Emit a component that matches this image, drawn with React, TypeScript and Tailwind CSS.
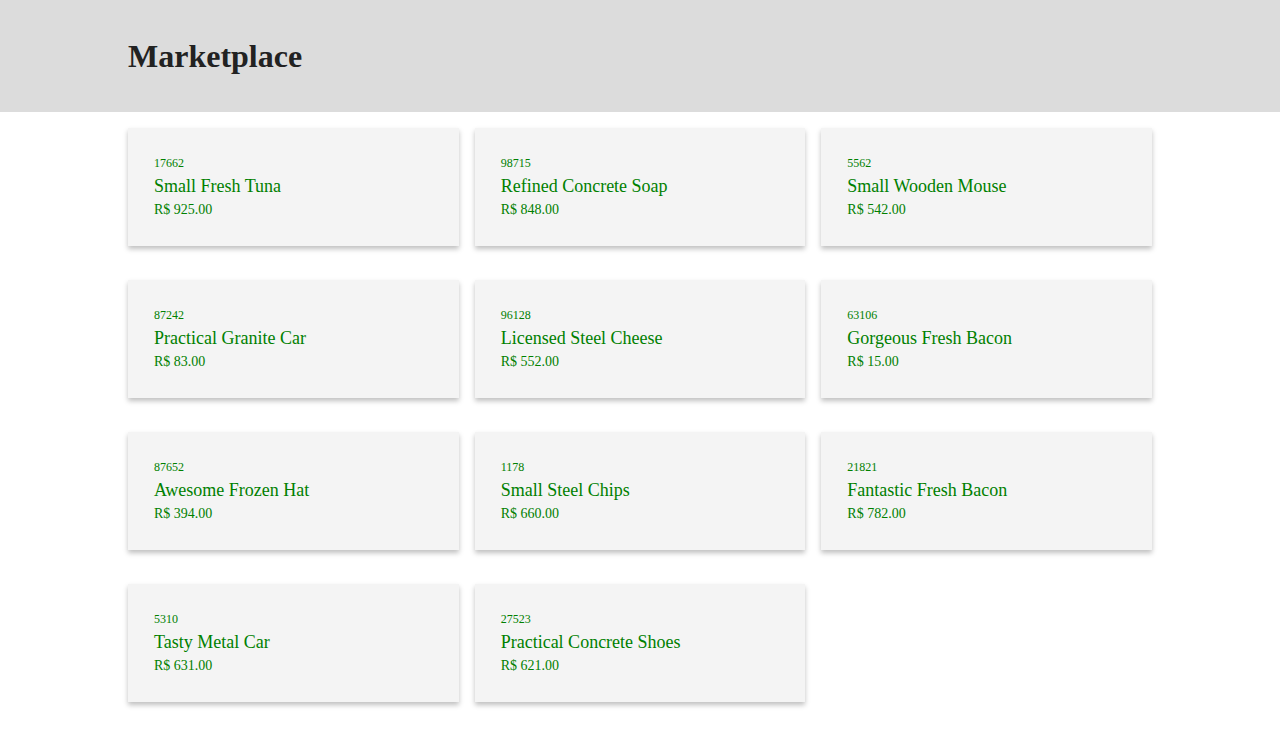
const products = [
  { id: 17662, name: "Small Fresh Tuna", price: 925 },
  { id: 98715, name: "Refined Concrete Soap", price: 848 },
  { id: 5562, name: "Small Wooden Mouse", price: 542 },
  { id: 87242, name: "Practical Granite Car", price: 83 },
  { id: 96128, name: "Licensed Steel Cheese", price: 552 },
  { id: 63106, name: "Gorgeous Fresh Bacon", price: 15 },
  { id: 87652, name: "Awesome Frozen Hat", price: 394 },
  { id: 1178, name: "Small Steel Chips", price: 660 },
  { id: 21821, name: "Fantastic Fresh Bacon", price: 782 },
  { id: 5310, name: "Tasty Metal Car", price: 631 },
  { id: 27523, name: "Practical Concrete Shoes", price: 621 },
]

function ProductCard({ id, name, price }: { id: number; name: string; price: number }) {
  return (
    <div className="h-[118px] bg-[#f4f4f4] px-[26px] pt-[27px] text-[#008000] shadow-[0_3px_5px_rgba(0,0,0,0.25)]">
      <p className="text-[12px] leading-[16px]">{id}</p>
      <p className="mt-[4px] text-[18px] leading-[22px]">{name}</p>
      <p className="mt-[4px] text-[14px] leading-[18px]">R$ {price.toFixed(2)}</p>
    </div>
  )
}

export default function App() {
  return (
    <div className="min-h-screen bg-white font-['Liberation_Serif',serif]">
      <header className="h-[112px] bg-[#dcdcdc]">
        <div className="mx-auto flex h-full w-[1024px] items-center">
          <h1 className="text-[32px] font-bold text-[#222]">Marketplace</h1>
        </div>
      </header>
      <main className="mx-auto grid w-[1024px] grid-cols-3 gap-x-[16px] gap-y-[34px] pt-[16px] pb-[32px]">
        {products.map((p) => (
          <ProductCard key={p.id} {...p} />
        ))}
      </main>
    </div>
  )
}
